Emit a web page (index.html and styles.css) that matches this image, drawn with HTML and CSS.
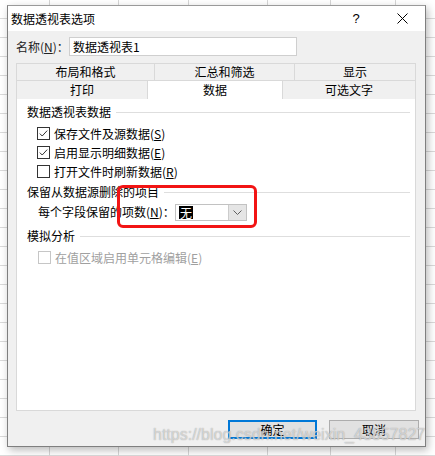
FILE: index.html
```html
<!DOCTYPE html>
<html>
<head>
<meta charset="utf-8">
<link rel="stylesheet" href="styles.css">
</head>
<body>
<div class="dialog">
  <div class="titlebar">
    <span class="title">数据透视表选项</span>
    <span class="cap">?</span>
    <span class="cap"><svg width="11" height="11" viewBox="0 0 11 11"><path d="M0.5 0.5L10.5 10.5M10.5 0.5L0.5 10.5" stroke="#000" stroke-width="1"/></svg></span>
  </div>
  <div class="body">
    <div class="namerow">
      <span class="namelabel">名称(<u>N</u>)：</span>
      <div class="input">数据透视表1</div>
    </div>
    <div class="tabs">
      <div class="tabrow r1">
        <div class="tab">布局和格式</div>
        <div class="tab">汇总和筛选</div>
        <div class="tab last">显示</div>
      </div>
      <div class="tabrow r2">
        <div class="tab">打印</div>
        <div class="tab sel">数据</div>
        <div class="tab last">可选文字</div>
      </div>
    </div>
    <div class="panel">
      <div class="section s1">数据透视表数据</div>
      <div class="checks">
        <div class="check"><svg class="box" width="13" height="13" viewBox="0 0 13 13"><rect x="0.5" y="0.5" width="12" height="12" fill="#fff" stroke="#333"/><path d="M2.8 6.6L5.2 9L10.2 3.6" fill="none" stroke="#333" stroke-width="1"/></svg><span>保存文件及源数据(<u>S</u>)</span></div>
        <div class="check"><svg class="box" width="13" height="13" viewBox="0 0 13 13"><rect x="0.5" y="0.5" width="12" height="12" fill="#fff" stroke="#333"/><path d="M2.8 6.6L5.2 9L10.2 3.6" fill="none" stroke="#333" stroke-width="1"/></svg><span>启用显示明细数据(<u>E</u>)</span></div>
        <div class="check"><svg class="box" width="13" height="13" viewBox="0 0 13 13"><rect x="0.5" y="0.5" width="12" height="12" fill="#fff" stroke="#333"/></svg><span>打开文件时刷新数据(<u>R</u>)</span></div>
      </div>
      <div class="section s2">保留从数据源删除的项目</div>
      <div class="field">
        <span class="fieldlabel">每个字段保留的项数(<u>N</u>)：</span>
        <div class="combo">
          <span class="value">无</span>
          <span class="drop"><svg width="9" height="5" viewBox="0 0 9 5"><path d="M0.5 0.5L4.5 4.5L8.5 0.5" fill="none" stroke="#606060" stroke-width="1"/></svg></span>
        </div>
      </div>
      <div class="section s3">模拟分析</div>
      <div class="check disabled"><svg class="box" width="13" height="13" viewBox="0 0 13 13"><rect x="0.5" y="0.5" width="12" height="12" fill="#fff" stroke="#c6c6c6"/></svg><span>在值区域启用单元格编辑(<u>E</u>)</span></div>
      <div class="highlight"></div>
    </div>
    <div class="buttons">
      <div class="btn primary">确定</div>
      <div class="btn">取消</div>
    </div>
  </div>
</div>
<div class="watermark">https://blog.csdn.net/weixin_43857827</div>
</body>
</html>
```

FILE: styles.css
```css
html, body {
  margin: 0;
  padding: 0;
}
body {
  width: 435px;
  height: 456px;
  overflow: hidden;
  position: relative;
  font-family: "Noto Sans CJK SC", "Liberation Sans", sans-serif;
  font-size: 12px;
  color: #000;
  background:
    linear-gradient(#d6d6d6, #d6d6d6) 49px 0 / 1px 100% no-repeat,
    linear-gradient(#d6d6d6, #d6d6d6) 118px 0 / 1px 100% no-repeat,
    linear-gradient(#d6d6d6, #d6d6d6) 188px 0 / 1px 100% no-repeat,
    linear-gradient(#d6d6d6, #d6d6d6) 267px 0 / 1px 100% no-repeat,
    linear-gradient(#d6d6d6, #d6d6d6) 330px 0 / 1px 100% no-repeat,
    linear-gradient(#d6d6d6, #d6d6d6) 395px 0 / 1px 100% no-repeat,
    repeating-linear-gradient(to bottom, #fff 0 18px, #dadada 18px 19px);
}
.dialog {
  margin: 5px 0 0 7px;
  width: 419px;
  height: 442px;
  box-sizing: border-box;
  border: 1px solid #7f7f7f;
  border-top-color: #9a9a9a;
  background: #f0f0f0;
  box-shadow: 2px 3px 8px rgba(0, 0, 0, 0.28);
  display: flex;
  flex-direction: column;
}
.titlebar {
  height: 25px;
  background: #fff;
  display: flex;
  align-items: center;
  flex: none;
}
.title {
  flex: 1;
  padding-left: 3px;
  font-size: 12px;
  line-height: 16px;
}
.cap {
  width: 46px;
  height: 25px;
  display: flex;
  align-items: center;
  justify-content: center;
  font-family: "Liberation Sans", sans-serif;
  font-size: 13px;
}
.body {
  flex: 1;
  padding: 6px 8px 0 8px;
  display: flex;
  flex-direction: column;
}
.namerow {
  display: flex;
  align-items: center;
  height: 19px;
}
.namelabel {
  width: 53px;
  color: #222;
}
.input {
  width: 228px;
  height: 19px;
  box-sizing: border-box;
  border: 1px solid #cfcfcf;
  background: #fff;
  padding-left: 3px;
  line-height: 17px;
}
.tabs {
  margin-top: 7px;
  width: 400px;
  position: relative;
  z-index: 1;
}
.tabrow {
  display: grid;
}
.r1 {
  grid-template-columns: 138px 140px 122px;
  height: 17px;
}
.r2 {
  grid-template-columns: 131px 135px 134px;
  height: 18px;
}
.tab {
  box-sizing: border-box;
  border-left: 1px solid #d9d9d9;
  border-top: 1px solid #d9d9d9;
  background: #f0f0f0;
  display: flex;
  align-items: center;
  justify-content: center;
  line-height: 16px;
}
.tab.last {
  border-right: 1px solid #d9d9d9;
}
.tab.sel {
  background: #fff;
  height: 19px;
  border-right: 1px solid #d9d9d9;
  margin-right: -1px;
  position: relative;
  z-index: 2;
}
.panel {
  position: relative;
  width: 400px;
  height: 313px;
  box-sizing: border-box;
  border: 1px solid #d9d9d9;
  background: #fff;
  padding: 5px 5px 0 10px;
}
.section {
  display: flex;
  align-items: center;
  height: 16px;
  line-height: 16px;
}
.section::after {
  content: "";
  flex: 1;
  height: 1px;
  background: #dedede;
  margin-left: 5px;
}
.s2 {
  margin-top: 3px;
}
.s3 {
  margin-top: 7px;
}
.checks {
  margin-top: 4px;
}
.check {
  display: flex;
  align-items: center;
  height: 19px;
  padding-left: 10px;
  gap: 4px;
  line-height: 16px;
}
.check .box {
  flex: none;
}
.check.disabled {
  margin-top: 4px;
  color: #a0a0a0;
  padding-left: 11px;
}
.field {
  margin-top: 3px;
  display: flex;
  align-items: center;
  height: 18px;
  padding-left: 11px;
}
.fieldlabel {
  width: 137px;
  line-height: 16px;
}
.combo {
  width: 72px;
  height: 17px;
  box-sizing: border-box;
  border: 1px solid #c2c2c2;
  background: #fff;
  display: flex;
  align-items: center;
}
.value {
  margin-left: 3px;
  background: #000;
  color: #fff;
  line-height: 13px;
  height: 13px;
  padding: 0 1px;
}
.drop {
  margin-left: auto;
  width: 17px;
  height: 15px;
  background: #e5e5e5;
  border-left: 1px solid #cccccc;
  display: flex;
  align-items: center;
  justify-content: center;
}
.highlight {
  position: absolute;
  left: 100px;
  top: 86px;
  width: 140px;
  height: 43px;
  box-sizing: border-box;
  border: 3px solid #f21414;
  border-radius: 6px;
}
.buttons {
  margin-top: 9px;
  margin-right: -2px;
  display: flex;
  justify-content: flex-end;
  gap: 12px;
}
.btn {
  width: 90px;
  height: 19px;
  box-sizing: border-box;
  border: 1px solid #adadad;
  background: #e1e1e1;
  display: flex;
  align-items: center;
  justify-content: center;
  line-height: 16px;
}
.btn.primary {
  width: 89px;
  border: 1px solid #0078d7;
  box-shadow: inset 0 0 0 1px #0078d7;
}
.watermark {
  position: absolute;
  left: 153px;
  top: 427px;
  font-family: "Liberation Sans", sans-serif;
  font-size: 16px;
  line-height: 16px;
  color: rgba(255, 255, 255, 0.55);
  text-shadow: 0 0 1px rgba(120, 120, 120, 0.8);
  white-space: nowrap;
}
```
